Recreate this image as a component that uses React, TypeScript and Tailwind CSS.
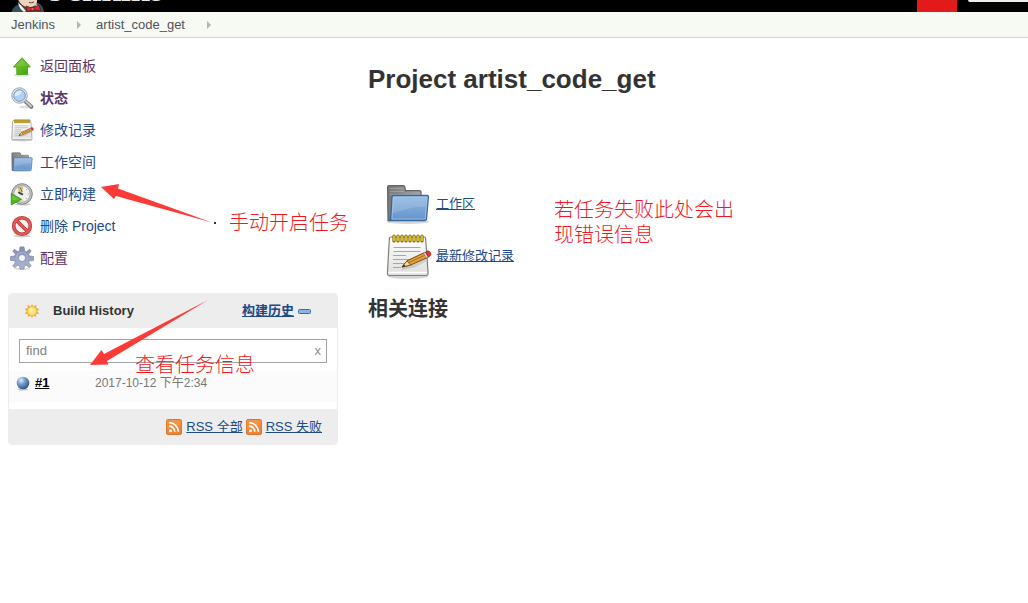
import React from "react";

type IconProps = { className?: string };

function ArrowUpIcon({ className = "size-6" }: IconProps) {
  return (
    <svg viewBox="0 0 24 24" className={className} aria-hidden="true">
      <defs>
        <linearGradient id="up" x1="0" y1="0" x2="1" y2="1">
          <stop offset="0" stopColor="#86cf38" />
          <stop offset="1" stopColor="#3f9f0c" />
        </linearGradient>
      </defs>
      <ellipse cx="12" cy="21" rx="8.5" ry="1.6" fill="#000" opacity=".13" />
      <path d="M12 3.8 20.4 13H17.500v7.500H6.800V13H3.400Z" fill="url(#up)" stroke="#56a726" strokeWidth="1" strokeLinejoin="round" />
      <path d="M12 5.300 18.200 12.100H5.600Z" fill="#b5ec70" opacity=".2" />
    </svg>
  );
}

function SearchIcon({ className = "size-6" }: IconProps) {
  return (
    <svg viewBox="0 0 24 24" className={className} aria-hidden="true">
      <ellipse cx="16" cy="21" rx="7" ry="1.500" fill="#000" opacity=".13" />
      <path d="M15 15 21.300 20.800" stroke="#77797a" strokeWidth="4" strokeLinecap="round" />
      <path d="M15.500 15 21 20.200" stroke="#c9cac8" strokeWidth="2" strokeLinecap="round" />
      <circle cx="9.500" cy="9.500" r="7.700" fill="#eceeee" stroke="#9da1a3" strokeWidth="1" />
      <circle cx="9.500" cy="9.500" r="5.800" fill="#b4d0f1" stroke="#6c94c7" strokeWidth="1" />
      <path d="M4.600 10C5 6 8 4.300 12 5c-1 3-3.600 5-7.400 5Z" fill="#eaf4ff" opacity=".75" />
    </svg>
  );
}

function NotepadIcon({ className = "size-6" }: IconProps) {
  return (
    <svg viewBox="0 0 48 48" className={className} aria-hidden="true">
      <defs>
        <linearGradient id="paper" x1="0" y1="0" x2="0" y2="1">
          <stop offset="0" stopColor="#fff" />
          <stop offset="1" stopColor="#dedfdd" />
        </linearGradient>
      </defs>
      <ellipse cx="24" cy="44.500" rx="20" ry="2.300" fill="#000" opacity=".17" />
      <path d="M6.500 5h34q1 0 1.100 1.200L44 39.500V42q0 1.500-1.500 1.500h-37Q3.500 43.500 3.500 42v-2.500L5.400 6.200Q5.500 5 6.500 5Z" fill="url(#paper)" stroke="#7e807d" strokeWidth="1.200" strokeLinejoin="round" />
      <path d="M4.500 40.500h38.500" stroke="#fff" strokeWidth="1.500" />
      <path d="M9.500 15.500h27M9.500 19.500h27M9 23.500h13M9 27.500h21M9 31.500h14M9 35.500h8" stroke="#a6a7a4" strokeWidth="1.200" />
      <path d="M10 4v5M14 4v5M18 4v5M22 4v5M26 4v5M30 4v5M34 4v5M38 4v5" stroke="#806400" strokeWidth="3.200" strokeLinecap="round" />
      <path d="M10 4v4.500M14 4v4.500M18 4v4.500M22 4v4.500M26 4v4.500M30 4v4.500M34 4v4.500M38 4v4.500" stroke="#edd32d" strokeWidth="1.600" strokeLinecap="round" />
      <path d="m18 36.500 12-2.500 12-6" stroke="#000" strokeWidth="3" opacity=".12" fill="none" />
      <path d="m18 35 5-6.200 18-8.500 3 5-17.500 7.800Z" fill="#dfa03f" stroke="#7b4907" strokeWidth="1" strokeLinejoin="round" />
      <path d="m18 35 5-6.200 3.500 4.300Z" fill="#f4dca4" stroke="#7b4907" strokeWidth=".8" />
      <path d="m18 35 2-2.500 1.400 1.700Z" fill="#222" />
      <path d="m25 30.500 17-7.800" stroke="#b66d14" strokeWidth="1" />
      <path d="m39.500 21 2-1 2.900 5-2 .9Z" fill="#d9dbdc" stroke="#777" strokeWidth=".6" />
      <path d="m41.500 20 2.100-1c2.200-.5 4.200 2.500 2.500 4.900L44.400 25Z" fill="#e33532" stroke="#a01919" strokeWidth=".8" />
    </svg>
  );
}

function FolderIcon({ className = "size-6" }: IconProps) {
  return (
    <svg viewBox="0 0 48 48" className={className} aria-hidden="true">
      <defs>
        <linearGradient id="folder" x1="0" y1="0" x2="0" y2="1">
          <stop offset="0" stopColor="#91b7e1" />
          <stop offset="1" stopColor="#6594cb" />
        </linearGradient>
        <linearGradient id="folderBack" x1="0" y1="0" x2="1" y2="0">
          <stop offset="0" stopColor="#777978" />
          <stop offset="1" stopColor="#a6a7a5" />
        </linearGradient>
      </defs>
      <ellipse cx="24" cy="41.500" rx="21" ry="2.500" fill="#000" opacity=".16" />
      <path d="M4 40.500 3.600 7q0-1.400 1.400-1.400h14.500q1.200 0 1.400 1.500l.6 3.500h14q1.500 0 1.500 1.500V39Z" fill="url(#folderBack)" stroke="#626463" strokeWidth="1.200" />
      <path d="M5.500 8.500h13M6 11.500h13.500M6 14.500h30" stroke="#c2c3c1" strokeWidth=".7" opacity=".6" />
      <path d="M9 15.500h34.400q1.200 0 1 1.400L42.500 39q-.2 1.500-1.500 1.500H5q1.500-.5 1.700-2.500L8 17q.1-1.500 1-1.500Z" fill="url(#folder)" stroke="#3567a5" strokeWidth="1.300" />
      <path d="M9.400 17H43L41.200 39H8Z" fill="none" stroke="#b7d1ef" strokeWidth=".8" opacity=".75" />
      <path d="M9.200 17.500h33l-.8 9C27 26.500 18 31 8.700 33Z" fill="#fff" opacity=".14" />
    </svg>
  );
}

function BuildIcon({ className = "size-6" }: IconProps) {
  return (
    <svg viewBox="0 0 24 24" className={className} aria-hidden="true">
      <ellipse cx="13" cy="22.300" rx="8" ry="1.200" fill="#000" opacity=".18" />
      <circle cx="12" cy="12" r="10.300" fill="#bfc1be" stroke="#858886" strokeWidth="1" />
      <circle cx="12" cy="12" r="8.200" fill="#efefeb" stroke="#a1a39f" strokeWidth=".8" />
      <path d="M12 4.800V6M19 12h-1.200M12 19v-1.200M17 7l-.9.900M17 17l-.9-.9" stroke="#a8a9a7" strokeWidth=".9" />
      <path d="M8 5.500 12.500 6l-.8 5-2.200-.5Z" fill="#e5cb5d" stroke="#ad8d22" strokeWidth=".4" />
      <path d="m8.300 10.200 4 2.300" stroke="#3d3d3d" strokeWidth="1.800" />
      <path d="m10 5 2.200 5" stroke="#6b6230" strokeWidth=".8" />
      <circle cx="12.300" cy="12.300" r="1" fill="#555" />
      <path d="M1.300 11.500 11.500 17.300 1.300 23Z" fill="#50b91f" stroke="#318d14" strokeWidth=".8" strokeLinejoin="round" />
      <path d="M2.200 13.300 9.500 17.300l-7.300.9Z" fill="#93dd5d" opacity=".4" />
    </svg>
  );
}

function DeleteIcon({ className = "size-6" }: IconProps) {
  return (
    <svg viewBox="0 0 24 24" className={className} aria-hidden="true">
      <ellipse cx="12" cy="22.200" rx="8.500" ry="1.300" fill="#000" opacity=".2" />
      <circle cx="12" cy="12" r="8.300" fill="#f3f2f2" stroke="#b62f2f" strokeWidth="3.600" />
      <path d="m6.200 6.200 11.600 11.600" stroke="#b62f2f" strokeWidth="3.400" />
      <circle cx="12" cy="12" r="8.300" fill="none" stroke="#df5959" strokeWidth="2.300" />
      <path d="m6.200 6.200 11.600 11.600" stroke="#df5959" strokeWidth="2.200" />
    </svg>
  );
}

function GearIcon({ className = "size-6" }: IconProps) {
  return (
    <svg viewBox="0 0 24 24" className={className} aria-hidden="true">
      <defs>
        <linearGradient id="gear" x1="0" y1="0" x2="0" y2="1">
          <stop offset="0" stopColor="#7f8fb5" />
          <stop offset="1" stopColor="#b0b8cf" />
        </linearGradient>
      </defs>
      <ellipse cx="12" cy="22.700" rx="8" ry="1" fill="#000" opacity=".15" />
      <path
        d="M10 .900h4l.5 4.100 1.800.8 3.200-2.600 1.700 1.700-2.600 3.300.8 1.800 4.100.5v3.800l-4.100.5-.8 1.800 2.600 3.200-1.900 1.900-3.200-2.600-1.700.8-.5 3.300h-3.800l-.5-3.300-1.700-.8-3.300 2.600-1.800-1.900 2.500-3.200-.7-1.800-4.100-.5v-3.800l4.100-.5.7-1.800-2.500-3.300 1.700-1.700 3.300 2.600 1.700-.8Z"
        fill="url(#gear)" stroke="#7986a6" strokeWidth=".7" strokeLinejoin="round"
      />
      <circle cx="12" cy="12" r="5.600" fill="none" stroke="#a5afca" strokeWidth="1.300" />
      <circle cx="12" cy="12" r="3.500" fill="#fff" stroke="#7885a6" strokeWidth=".8" />
    </svg>
  );
}

function SunIcon() {
  return (
    <svg viewBox="0 0 16 16" className="size-4" aria-hidden="true">
      <path d="m8 1 1.500 2.300 3.100-1.500-.3 3.200 2.900 1-2 2.200 2 2.500-3.200.4-.2 3-2.500-1.300L8 15l-1.500-2.200L4 14.100l-.3-3-3-.4 2-2.500-2-2.200 3-1-.3-3.200 3.100 1.500Z" fill="#f0ad3c" />
      <circle cx="8" cy="8" r="4.400" fill="#ffe47a" stroke="#f3bf4c" strokeWidth=".8" />
      <circle cx="7" cy="7" r="2" fill="#fff3b4" />
    </svg>
  );
}

function BallIcon() {
  return (
    <svg viewBox="0 0 16 16" className="size-4" aria-hidden="true">
      <defs>
        <radialGradient id="ball" cx=".35" cy=".28" r=".75">
          <stop offset="0" stopColor="#e2eefb" />
          <stop offset=".4" stopColor="#7ba3d0" />
          <stop offset="1" stopColor="#285288" />
        </radialGradient>
      </defs>
      <ellipse cx="8" cy="14.500" rx="5" ry="1" fill="#000" opacity=".2" />
      <circle cx="8" cy="8" r="6.300" fill="url(#ball)" />
    </svg>
  );
}

function RssIcon() {
  return (
    <svg viewBox="0 0 16 16" className="size-4 shrink-0" aria-hidden="true">
      <rect x=".5" y=".5" width="15" height="15" rx="1.500" fill="#ee8337" stroke="#dc7830" />
      <path d="M1 1h14v5Q8 6 1 11Z" fill="#ffb35c" opacity=".35" />
      <circle cx="4.500" cy="11.700" r="1.500" fill="#fff" />
      <path d="M3.200 7.200a5.600 5.600 0 0 1 5.600 5.600M3.200 3.700a9.100 9.100 0 0 1 9.100 9.100" fill="none" stroke="#fff" strokeWidth="1.800" />
    </svg>
  );
}

function Mascot() {
  return (
    <svg viewBox="0 0 34 12" className="h-3 w-[34px] shrink-0" aria-hidden="true">
      <path d="M.5 12Q2 6 8 4.500L27 3q5 2 6 9Z" fill="#335061" />
      <path d="M7 0h19q.5 4-3 6L17 8Q10 6 7 0Z" fill="#efd2bc" />
      <path d="m7 2 8 9-2 1Q8 9 7 2ZM25 4l2 2-3 2Z" fill="#f5f2ec" />
      <path d="M7 0q2 5.500 9 8M18 2.500q3 .8 5-.5" fill="none" stroke="#48342c" strokeWidth=".9" />
      <path d="m15 6 6 2 7-3 2 6-6.500-1-7.500 1.500Z" fill="#d5292d" stroke="#5b1519" strokeWidth=".7" />
      <path d="M20 7.500h3v3h-3Z" fill="#ef5a52" stroke="#5b1519" strokeWidth=".6" />
    </svg>
  );
}

function Crumb({ children }: { children: React.ReactNode }) {
  return (
    <li className="flex items-center">
      <a href="#" className="text-[#4d545d]">{children}</a>
      <svg viewBox="0 0 4 8" className="mx-[11px] ml-[22px] h-2 w-1" aria-hidden="true">
        <path d="M0 0 4 4 0 8Z" fill="#b3b5b1" />
      </svg>
    </li>
  );
}

const tasks = [
  { label: "返回面板", Icon: ArrowUpIcon, style: "text-[#5c3566]" },
  { label: "状态", Icon: SearchIcon, style: "font-bold text-[#5c3566]" },
  { label: "修改记录", Icon: NotepadIcon, style: "text-[#204a87]" },
  { label: "工作空间", Icon: FolderIcon, style: "text-[#204a87]" },
  { label: "立即构建", Icon: BuildIcon, style: "text-[#204a87]" },
  { label: "删除 Project", Icon: DeleteIcon, style: "text-[#204a87]" },
  { label: "配置", Icon: GearIcon, style: "text-[#5c3566]" },
];

function BuildHistory() {
  return (
    <section className="mt-[19px] overflow-hidden rounded border border-[#ededed] text-[13px] leading-5">
      <header className="flex h-[34px] items-center bg-[#ededed] pr-[26px] pl-[15px]">
        <SunIcon />
        <h2 className="ml-[13px] font-bold">Build History</h2>
        <a href="#" className="ml-auto flex items-center gap-1 font-bold text-[#204a87]">
          <span className="underline">构建历史</span>
          <svg viewBox="0 0 13 5" className="h-[5px] w-[13px]" aria-hidden="true">
            <rect x=".5" y=".5" width="12" height="4" rx="1" fill="#8db4dd" stroke="#3b6ca8" />
          </svg>
        </a>
      </header>
      <div className="px-[10px] pt-[11px] pb-2">
        <label className="flex h-6 items-center border border-[#a3a3a3] bg-white">
          <input
            type="text"
            placeholder="find"
            aria-label="find"
            className="min-w-0 flex-1 bg-transparent px-1.5 outline-none placeholder:text-[#808080]"
          />
          <button type="button" className="px-[5px] text-[#8c8c8c]">x</button>
        </label>
      </div>
      <table className="mb-[7px] w-full bg-[#fbfbfb]">
        <tbody>
          <tr className="h-[31px] align-top">
            <td className="w-[86px] pt-0.5 pl-1.5">
              <span className="flex items-center gap-1">
                <BallIcon />
                <a href="#" className="font-bold text-black underline">#1</a>
              </span>
            </td>
            <td className="pt-0.5 text-xs leading-5 text-[#777]">2017-10-12 下午2:34</td>
          </tr>
        </tbody>
      </table>
      <footer className="flex h-[35px] items-center justify-end gap-[3px] bg-[#ededed] pr-[15px] text-[#204a87]">
        <a href="#" className="flex items-center gap-1"><RssIcon /><span className="underline">RSS 全部</span></a>
        <a href="#" className="flex items-center gap-1"><RssIcon /><span className="underline">RSS 失败</span></a>
      </footer>
    </section>
  );
}

function Annotations() {
  return (
    <div className="pointer-events-none absolute inset-0 overflow-hidden text-xl leading-[25px] font-light text-[#f01722]">
      <svg viewBox="0 0 400 400" className="absolute top-0 left-0 size-[400px]" aria-hidden="true">
        <path d="M101 187 119 184 118 188.500 212 222.500 116 196 114 199Z" fill="#fa3b36" />
        <path d="M90 365 101.500 350 104 354 208 300 107 361 108.500 364.500Z" fill="#fa3b36" />
        <path d="M214 222h2v2h-2Z" fill="#333" />
      </svg>
      <p className="absolute top-[211px] left-[229px] whitespace-nowrap">手动开启任务</p>
      <p className="absolute top-[353px] left-[135px] whitespace-nowrap">查看任务信息</p>
      <p className="absolute top-[198px] left-[554px] w-[180px]">若任务失败此处会出现错误信息</p>
    </div>
  );
}

export default function App() {
  return (
    <div className="relative min-h-screen bg-white font-['Liberation_Sans','Noto_Sans_CJK_SC',sans-serif] text-[#333]">
      <header className="flex h-3 items-start overflow-hidden bg-black pl-[11px]">
        <Mascot />
        <a href="#" className="-mt-[30px] ml-1 font-['Liberation_Serif',serif] text-[35px] leading-10 font-bold text-[#e8e8e8]">
          Jenkins
        </a>
        <span className="ml-auto h-3 w-10 bg-[#e21a1a]" />
        <span className="ml-[11px] h-0.5 w-[60px] rounded-bl bg-[#eee]" />
      </header>
      <nav aria-label="Breadcrumb" className="h-[26px] border-b border-[#d3d7cf] bg-[#f6faf2] pl-[11px] text-[13px] leading-[25px]">
        <ol className="flex gap-1">
          <Crumb>Jenkins</Crumb>
          <Crumb>artist_code_get</Crumb>
        </ol>
      </nav>
      <div className="flex items-start">
        <aside className="w-[338px] shrink-0 pt-3 pl-2">
          <ul>
            {tasks.map(({ label, Icon, style }) => (
              <li key={label}>
                <a href="#" className={`flex h-8 items-center gap-1.5 pl-0.5 text-sm ${style}`}>
                  <Icon />
                  <span>{label}</span>
                </a>
              </li>
            ))}
          </ul>
          <BuildHistory />
        </aside>
        <main className="min-w-0 flex-1 pt-[25px] pl-[30px]">
          <h1 className="text-[26px] leading-8 font-bold">Project artist_code_get</h1>
          <ul className="mt-[83px] ml-4 text-[13px] leading-5 text-[#204a87]">
            <li className="flex h-[52px] items-center gap-1">
              <FolderIcon className="size-12 shrink-0" />
              <a href="#" className="underline">工作区</a>
            </li>
            <li className="flex h-[52px] items-center gap-1">
              <NotepadIcon className="size-12 shrink-0" />
              <a href="#" className="underline">最新修改记录</a>
            </li>
          </ul>
          <h2 className="mt-[13px] text-xl leading-7 font-bold">相关连接</h2>
        </main>
      </div>
      <Annotations />
    </div>
  );
}
